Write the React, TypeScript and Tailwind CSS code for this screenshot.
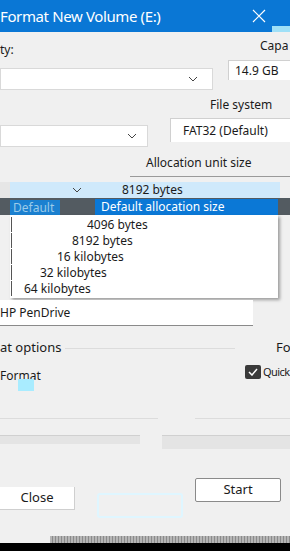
import React from "react";

const Chevron = ({ className }: { className?: string }) => (
  <svg className={className} width="10" height="6" viewBox="0 0 10 6" fill="none">
    <path d="M1 1l4 4 4-4" stroke="#444" strokeWidth="1" />
  </svg>
);

const sizes = ["4096 bytes", "8192 bytes", "16 kilobytes", "32 kilobytes", "64 kilobytes"];
const pads = ["pl-[75px]", "pl-[60px]", "pl-[45px]", "pl-[28px]", "pl-[12px]"];

const App = () => {
  return (
    <div className="w-[290px] h-[551px] bg-[#f0f0f0] overflow-hidden flex flex-col font-['Noto_Sans',sans-serif] text-[12px] text-[#1a1a1a]">
      {/* title bar */}
      <div className="h-[32px] bg-[#0a77d5] flex items-center justify-between text-white text-[15px] shrink-0">
        <span className="tracking-tight">Format New Volume (E:)</span>
        <div className="flex items-center h-full">
          <svg width="14" height="14" viewBox="0 0 14 14" className="mr-[6px]">
            <path d="M1 1l12 12M13 1L1 13" stroke="white" strokeWidth="1.2" />
          </svg>
          <div className="w-[18px] h-[6px] bg-[#9fe0f7] self-end" />
        </div>
      </div>

      {/* capacity */}
      <div className="h-[28px] flex justify-between items-end shrink-0">
        <span className="pb-[1px]">ty:</span>
        <span className="self-center w-[30px] overflow-hidden whitespace-nowrap">Capa</span>
      </div>
      <div className="h-[32px] flex justify-between shrink-0">
        <div className="mt-[8px] w-[213px] h-[22px] bg-white border border-[#d9d9d9] flex items-center justify-end pr-[14px]">
          <Chevron />
        </div>
        <div className="w-[62px] h-[20px] bg-white border-l border-t border-[#d0d0d0] flex items-center pl-[6px]">
          14.9 GB
        </div>
      </div>

      {/* file system */}
      <div className="h-[26px] flex items-center pl-[210px] shrink-0">File system</div>
      <div className="h-[32px] flex justify-between shrink-0">
        <div className="mt-[7px] w-[148px] h-[22px] bg-white border border-[#d9d9d9] flex items-center justify-end pr-[10px]">
          <Chevron />
        </div>
        <div className="w-[120px] h-[24px] bg-white border-l border-t border-[#d0d0d0] flex items-center pl-[12px]">
          FAT32 (Default)
        </div>
      </div>

      {/* allocation unit size */}
      <div className="h-[26px] flex items-center pl-[146px] shrink-0">Allocation unit size</div>
      <div className="h-[6px] ml-[130px] border-t border-[#9a9a9a] shrink-0" />
      <div className="h-[16px] flex shrink-0">
        <div className="w-[10px] bg-[#e6e6e6]" />
        <div className="w-[270px] bg-[#cfe9fb] flex items-center">
          <Chevron className="ml-[62px]" />
          <span className="ml-[40px]">8192 bytes</span>
        </div>
      </div>
      <div className="h-[17px] bg-[#535b61] flex items-end shrink-0">
        <div className="ml-[10px] w-[50px] h-[15px] bg-[#1b80d0] text-[#9ccbe9] flex items-center pl-[3px]">Default</div>
        <div className="ml-[35px] w-[183px] h-[16px] bg-[#0b78d6] text-white flex items-center pl-[6px]">
          Default allocation size
        </div>
      </div>
      <div className="ml-[10px] w-[268px] h-[83px] bg-white shadow-[2px_2px_3px_rgba(0,0,0,0.35)] flex flex-col justify-around py-[2px] shrink-0">
        {sizes.map((s, i) => (
          <div key={s} className={pads[i] + " leading-[15px] border-l border-[#555] ml-[1px]"}>
            {s}
          </div>
        ))}
      </div>

      {/* volume label */}
      <div className="mt-[2px] h-[26px] w-[253px] bg-white border-b border-[#8a8a8a] flex items-center shrink-0">
        HP PenDrive
      </div>

      {/* format options */}
      <div className="mt-[12px] h-[20px] flex items-center shrink-0">
        <span className="text-[13px]">at options</span>
        <div className="ml-[4px] w-[170px] border-t border-[#dcdcdc]" />
        <span className="ml-auto text-[13px] w-[14px] overflow-hidden">Fo</span>
      </div>
      <div className="mt-[2px] h-[24px] flex items-center shrink-0">
        <span className="relative mt-[8px]">
          Format
          <span className="absolute left-[18px] top-[12px] w-[16px] h-[12px] bg-[#a9ecff]" />
        </span>
        <div className="ml-auto flex items-center">
          <div className="w-[16px] h-[14px] bg-[#3a3a3a] rounded-[2px] flex items-center justify-center">
            <svg width="10" height="8" viewBox="0 0 10 8">
              <path d="M1 4l3 3 5-6" stroke="white" strokeWidth="1.5" fill="none" />
            </svg>
          </div>
          <span className="ml-[2px] w-[27px] text-[11px] tracking-tighter whitespace-nowrap">Quick</span>
        </div>
      </div>

      {/* faint group lines */}
      <div className="mt-[34px] flex justify-between shrink-0">
        <div className="w-[158px] border-t border-[#dcdcdc]" />
        <div className="w-[95px] border-t border-[#dcdcdc]" />
      </div>
      <div className="mt-[16px] flex justify-between shrink-0">
        <div className="w-[140px] h-[9px] bg-[#e4e4e4] border-t border-[#d0d0d0]" />
        <div className="w-[128px] h-[14px] bg-[#e4e4e4] border-t border-[#d0d0d0]" />
      </div>

      {/* buttons */}
      <div className="mt-[29px] h-[44px] flex items-start shrink-0">
        <div className="mt-[9px] w-[75px] h-[23px] bg-white border-b border-r border-[#cfcfcf] flex items-center justify-center text-[13px]">
          Close
        </div>
        <div className="mt-[15px] ml-[22px] w-[86px] h-[25px] border-2 border-[#dff6ff] rounded-[3px]" />
        <div className="ml-[12px] w-[86px] h-[24px] bg-white border border-[#8a8a8a] rounded-[2px] flex items-center justify-center text-[13px]">
          Start
        </div>
      </div>

      <div className="flex-1" />
      <div className="ml-[50px] h-[7px] bg-[repeating-linear-gradient(90deg,#b5b5b5_0px,#b5b5b5_2px,#8a8a8a_2px,#8a8a8a_3px)] shrink-0" />
      <div className="h-[8px] bg-black shrink-0" />
    </div>
  );
};

export default App;
